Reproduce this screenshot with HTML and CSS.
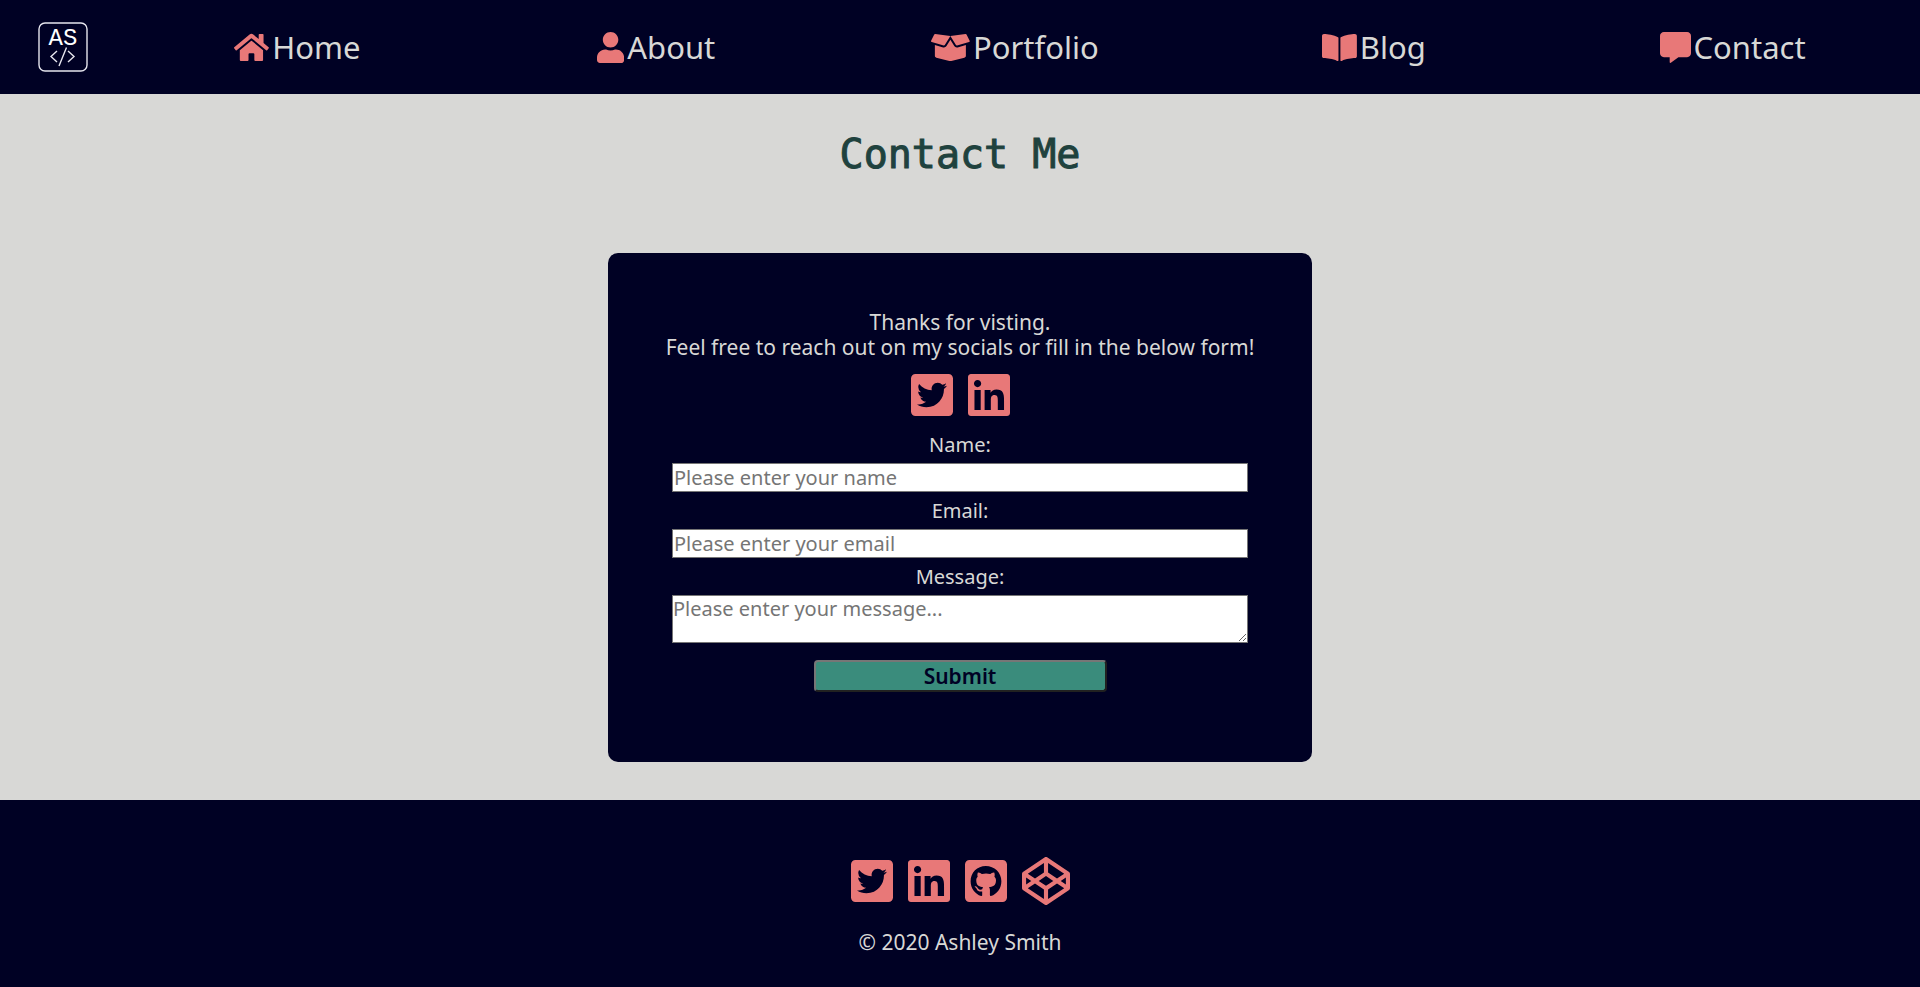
FILE: index.html
```html
<!DOCTYPE html>
<html lang="en">
<head>
<meta charset="utf-8">
<meta name="viewport" content="width=device-width, initial-scale=1">
<title>Contact Me | Ashley Smith</title>
<link rel="stylesheet" href="styles.css">
</head>
<body>
<svg class="sprite" aria-hidden="true">
  <symbol id="twitter" viewBox="0 0 448 512"><path d="M400 32H48C21.5 32 0 53.5 0 80v352c0 26.5 21.5 48 48 48h352c26.5 0 48-21.5 48-48V80c0-26.5-21.5-48-48-48zm-48.9 158.8c.2 2.8.2 5.7.2 8.5 0 86.7-66 186.6-186.6 186.6-37.2 0-71.7-10.8-100.7-29.4 5.3.6 10.4.8 15.8.8 30.7 0 58.9-10.4 81.4-28-28.8-.6-53-19.5-61.3-45.5 10.1 1.5 19.2 1.5 29.6-1.2-30-6.1-52.5-32.5-52.5-64.4v-.8c8.7 4.9 18.9 7.9 29.6 8.3a65.447 65.447 0 0 1-29.2-54.6c0-12.2 3.2-23.4 8.9-33.1 32.3 39.8 80.8 65.8 135.2 68.6-9.3-44.5 24-80.6 64-80.6 18.9 0 35.9 7.9 47.9 20.7 14.8-2.8 29-8.3 41.6-15.8-4.9 15.2-15.2 28-28.8 36.1 13.2-1.4 26-5.1 37.8-10.2-8.9 13.1-20.1 24.7-32.9 34z"/></symbol>
  <symbol id="linkedin" viewBox="0 0 448 512"><path d="M416 32H31.9C14.3 32 0 46.5 0 64.3v383.4C0 465.5 14.3 480 31.9 480H416c17.6 0 32-14.5 32-32.3V64.3c0-17.8-14.4-32.3-32-32.3zM135.4 416H69V202.2h66.5V416zm-33.2-243c-21.3 0-38.5-17.3-38.5-38.5S80.9 96 102.2 96c21.2 0 38.5 17.3 38.5 38.5 0 21.3-17.2 38.5-38.5 38.5zm282.1 243h-66.4V312c0-24.8-.5-56.7-34.5-56.7-34.6 0-39.9 27-39.9 54.9V416h-66.4V202.2h63.7v29.2h.9c8.9-16.8 30.6-34.5 62.9-34.5 67.2 0 79.7 44.3 79.7 101.9V416z"/></symbol>
  <symbol id="github" viewBox="0 0 448 512"><path d="M400 32H48C21.5 32 0 53.5 0 80v352c0 26.5 21.5 48 48 48h352c26.5 0 48-21.5 48-48V80c0-26.5-21.5-48-48-48zM277.3 415.7c-8.4 1.5-11.5-3.7-11.5-8 0-5.4.2-33 .2-55.3 0-15.6-5.2-25.5-11.3-30.7 37-4.1 76-9.2 76-73.1 0-18.2-6.5-27.3-17.1-39 1.7-4.3 7.4-22-1.7-45-13.9-4.3-45.7 17.9-45.7 17.9-13.2-3.7-27.5-5.6-41.6-5.6-14.1 0-28.4 1.9-41.6 5.6 0 0-31.8-22.2-45.7-17.9-9.1 22.9-3.5 40.6-1.7 45-10.6 11.7-15.6 20.8-15.6 39 0 63.6 37.3 69 74.3 73.1-4.8 4.3-9.1 11.7-10.6 22.3-9.5 4.3-33.8 11.7-48.3-13.9-9.1-15.8-25.5-17.1-25.5-17.1-16.2-.2-1.1 10.2-1.1 10.2 10.8 5 18.4 24.2 18.4 24.2 9.7 29.7 56.1 19.7 56.1 19.7 0 13.9.2 36.5.2 40.6 0 4.3-3 9.5-11.5 8-66-22.1-112.2-84.9-112.2-158.3 0-91.8 70.2-161.5 162-161.5S388 165.6 388 257.4c.1 73.4-44.7 136.3-110.7 158.3z"/></symbol>
  <symbol id="codepen" viewBox="0 0 512 512"><path d="M502.285 159.704l-234-156c-7.987-4.915-16.511-4.96-24.571 0l-234 156C3.714 163.703 0 170.847 0 177.989v155.999c0 7.143 3.714 14.286 9.715 18.286l234 156.022c7.987 4.915 16.511 4.96 24.571 0l234-156.022c6-3.999 9.715-11.143 9.715-18.286V177.989c-.001-7.142-3.715-14.286-9.716-18.285zM278 63.131l172.286 114.858-76.857 51.429L278 165.703V63.131zm-44 0v102.572l-95.429 63.715-76.857-51.429L234 63.131zM44 219.132l55.143 36.857L44 292.847v-73.715zm190 229.715L61.714 333.989l76.857-51.429L234 346.275v102.572zm22-140.858l-77.715-52 77.715-52 77.715 52-77.715 52zm22 140.858V346.275l95.429-63.715 76.857 51.429L278 448.847zm190-156l-55.143-36.857L468 219.132v73.715z"/></symbol>
</svg>

<header class="header">
  <a class="logo" href="#" aria-label="Ashley Smith">
    <svg viewBox="0 0 50 50" width="50" height="50" aria-hidden="true">
      <rect x="1" y="1" width="48" height="48" rx="6" class="logo-line"/>
      <text x="25" y="23" text-anchor="middle" class="logo-text">AS</text>
      <path d="M19 29L13 34.500L19 40M30 29L36 34.500L30 40M28.500 25.500L21 44" class="logo-line"/>
    </svg>
  </a>
  <nav class="nav">
    <a class="nav-link" href="#"><svg class="nav-icon" viewBox="0 0 576 512" aria-hidden="true"><path d="M280.37 148.26L96 300.11V464a16 16 0 0 0 16 16l112.06-.29a16 16 0 0 0 15.92-16V368a16 16 0 0 1 16-16h64a16 16 0 0 1 16 16v95.64a16 16 0 0 0 16 16.05L464 480a16 16 0 0 0 16-16V300L295.67 148.26a12.19 12.19 0 0 0-15.3 0zM571.6 251.47L488 182.56V44.05a12 12 0 0 0-12-12h-56a12 12 0 0 0-12 12v72.61L318.47 43a48 48 0 0 0-61 0L4.34 251.47a12 12 0 0 0-1.6 16.9l25.5 31A12 12 0 0 0 45.15 301l235.22-193.74a12.19 12.19 0 0 1 15.3 0L530.9 301a12 12 0 0 0 16.9-1.6l25.5-31a12 12 0 0 0-1.7-16.93z"/></svg>Home</a>
    <a class="nav-link" href="#"><svg class="nav-icon" viewBox="0 0 448 512" aria-hidden="true"><path d="M224 256c70.7 0 128-57.3 128-128S294.7 0 224 0 96 57.3 96 128s57.3 128 128 128zm89.6 32h-16.7c-22.2 10.2-46.9 16-72.9 16s-50.6-5.8-72.9-16h-16.7C60.2 288 0 348.2 0 422.4V464c0 26.5 21.5 48 48 48h352c26.5 0 48-21.5 48-48v-41.6c0-74.2-60.2-134.4-134.4-134.4z"/></svg>About</a>
    <a class="nav-link" href="#"><svg class="nav-icon" viewBox="0 0 640 512" aria-hidden="true"><path d="M425.7 256c-16.9 0-32.8-9-41.4-23.4L320 126l-64.2 106.6c-8.7 14.5-24.6 23.5-41.5 23.5-4.5 0-9-.6-13.3-1.9L64 215v178c0 14.7 10 27.5 24.2 31l216.2 54.1c10.2 2.5 20.9 2.5 31 0L551.8 424c14.2-3.6 24.2-16.4 24.2-31V215l-137 39.1c-4.3 1.3-8.8 1.9-13.3 1.9zm212.6-112.2L586.8 41c-3.1-6.2-9.8-9.8-16.7-8.9L320 64l91.7 152.1c3.8 6.3 11.4 9.3 18.5 7.3l197.9-56.5c9.9-2.9 14.7-13.9 10.2-23.1zM53.2 41L1.7 143.8c-4.6 9.2.3 20.2 10.1 23l197.9 56.5c7.1 2 14.7-1 18.5-7.3L320 64 69.8 32.1c-6.9-.8-13.5 2.7-16.6 8.9z"/></svg>Portfolio</a>
    <a class="nav-link" href="#"><svg class="nav-icon" viewBox="0 0 576 512" aria-hidden="true"><path d="M542.22 32.05c-54.8 3.11-163.72 14.43-230.96 55.59-4.64 2.84-7.27 7.89-7.27 13.17v363.87c0 11.55 12.63 18.85 23.28 13.49 69.18-34.82 169.23-44.32 218.7-46.92 16.89-.89 30.02-14.43 30.02-30.66V62.75c.01-17.71-15.35-31.74-33.77-30.7zM264.73 87.64C197.5 46.48 88.58 35.17 33.78 32.05 15.36 31.01 0 45.04 0 62.75V400.6c0 16.24 13.13 29.78 30.02 30.66 49.49 2.6 149.59 12.11 218.77 46.95 10.62 5.35 23.21-1.94 23.21-13.46V100.63c0-5.29-2.62-10.14-7.27-12.99z"/></svg>Blog</a>
    <a class="nav-link" href="#"><svg class="nav-icon" viewBox="0 0 512 512" aria-hidden="true"><path d="M448 0H64C28.7 0 0 28.7 0 64v288c0 35.3 28.7 64 64 64h96v84c0 9.8 11.2 15.5 19.1 9.7L304 416h144c35.3 0 64-28.7 64-64V64c0-35.3-28.7-64-64-64z"/></svg>Contact</a>
  </nav>
</header>

<main class="main">
  <h1 class="title">Contact Me</h1>
  <section class="card">
    <p class="intro">Thanks for visting.<br>Feel free to reach out on my socials or fill in the below form!</p>
    <div class="socials">
      <a class="social" href="#" aria-label="Twitter"><svg class="square-icon"><use href="#twitter"/></svg></a>
      <a class="social" href="#" aria-label="LinkedIn"><svg class="square-icon"><use href="#linkedin"/></svg></a>
    </div>
    <form class="form">
      <label class="label" for="name">Name:</label>
      <input class="field" id="name" type="text" placeholder="Please enter your name">
      <label class="label" for="email">Email:</label>
      <input class="field" id="email" type="email" placeholder="Please enter your email">
      <label class="label" for="message">Message:</label>
      <textarea class="field message" id="message" placeholder="Please enter your message..."></textarea>
      <button class="submit" type="submit">Submit</button>
    </form>
  </section>
</main>

<footer class="footer">
  <div class="socials">
    <a class="social" href="#" aria-label="Twitter"><svg class="square-icon"><use href="#twitter"/></svg></a>
    <a class="social" href="#" aria-label="LinkedIn"><svg class="square-icon"><use href="#linkedin"/></svg></a>
    <a class="social" href="#" aria-label="GitHub"><svg class="square-icon"><use href="#github"/></svg></a>
    <a class="social" href="#" aria-label="CodePen"><svg class="wide-icon"><use href="#codepen"/></svg></a>
  </div>
  <p class="copyright">© 2020 Ashley Smith</p>
</footer>
</body>
</html>
```
FILE: styles.css
```css
* {
  box-sizing: border-box;
}

body {
  display: flex;
  flex-direction: column;
  min-height: 100vh;
  margin: 0;
  background: #d8d8d6;
  color: #d8d8d6;
  font: 20px/25px "Noto Sans", "Open Sans", sans-serif;
}

.sprite {
  display: none;
}

.header {
  display: flex;
  align-items: center;
  gap: 30px;
  padding: 22px 8px 22px 38px;
  background: #000124;
}

.logo,
.logo svg {
  display: block;
}

.logo-line {
  fill: none;
  stroke: #e6e6ee;
  stroke-width: 1.4;
}

.logo-text {
  fill: #ffffff;
  font: 24px "Liberation Mono", monospace;
}

.nav {
  display: grid;
  flex: 1;
  grid-template-columns: repeat(5, 1fr);
}

.nav-link {
  display: flex;
  align-items: center;
  justify-content: center;
  gap: 3px;
  color: inherit;
  font-size: 31px;
  line-height: 40px;
  text-decoration: none;
}

.nav-icon {
  height: 31px;
  fill: #e87878;
}

.main {
  padding: 40px 20px 38px;
}

.title {
  margin: 0 0 79px;
  color: #1f423e;
  font: 40px/40px "DejaVu Sans Mono", "Liberation Mono", monospace;
  text-align: center;
  -webkit-text-stroke: 1px #1f423e;
}

.card {
  max-width: 704px;
  margin: 0 auto;
  padding: 57px 48px 70px;
  border-radius: 10px;
  background: #000124;
  text-align: center;
}

.intro,
.copyright {
  margin: 0;
  font-size: 21px;
}

.socials {
  display: flex;
  justify-content: center;
  gap: 15px;
}

.social {
  display: flex;
}

.square-icon {
  width: 42px;
  height: 48px;
  fill: #e87878;
}

.wide-icon {
  width: 48px;
  height: 48px;
  fill: #e87878;
}

.card .socials {
  margin-top: 11px;
}

.form {
  display: flex;
  flex-direction: column;
  align-items: center;
  padding: 0 16px;
}

.label {
  margin: 13px 0 6px;
}

.field {
  width: 100%;
  height: 29px;
  padding: 1px;
  border: 1px solid #767676;
  border-radius: 0;
  background: #ffffff;
  color: #000000;
  font: inherit;
}

.field::placeholder {
  color: #757575;
}

.message {
  height: 48px;
  padding: 0;
}

.field + .label {
  margin-top: 6px;
}

.submit {
  width: 293px;
  max-width: 100%;
  margin-top: 17px;
  padding: 1px 6px;
  border: 2px outset #767676;
  border-radius: 4px;
  background: #3a8c7c;
  color: #000124;
  font: 600 21px/26px "Noto Sans", "Open Sans", sans-serif;
}

.footer {
  flex: 1;
  padding: 57px 20px 24px;
  background: #000124;
  text-align: center;
}

.copyright {
  margin-top: 25px;
}
```
